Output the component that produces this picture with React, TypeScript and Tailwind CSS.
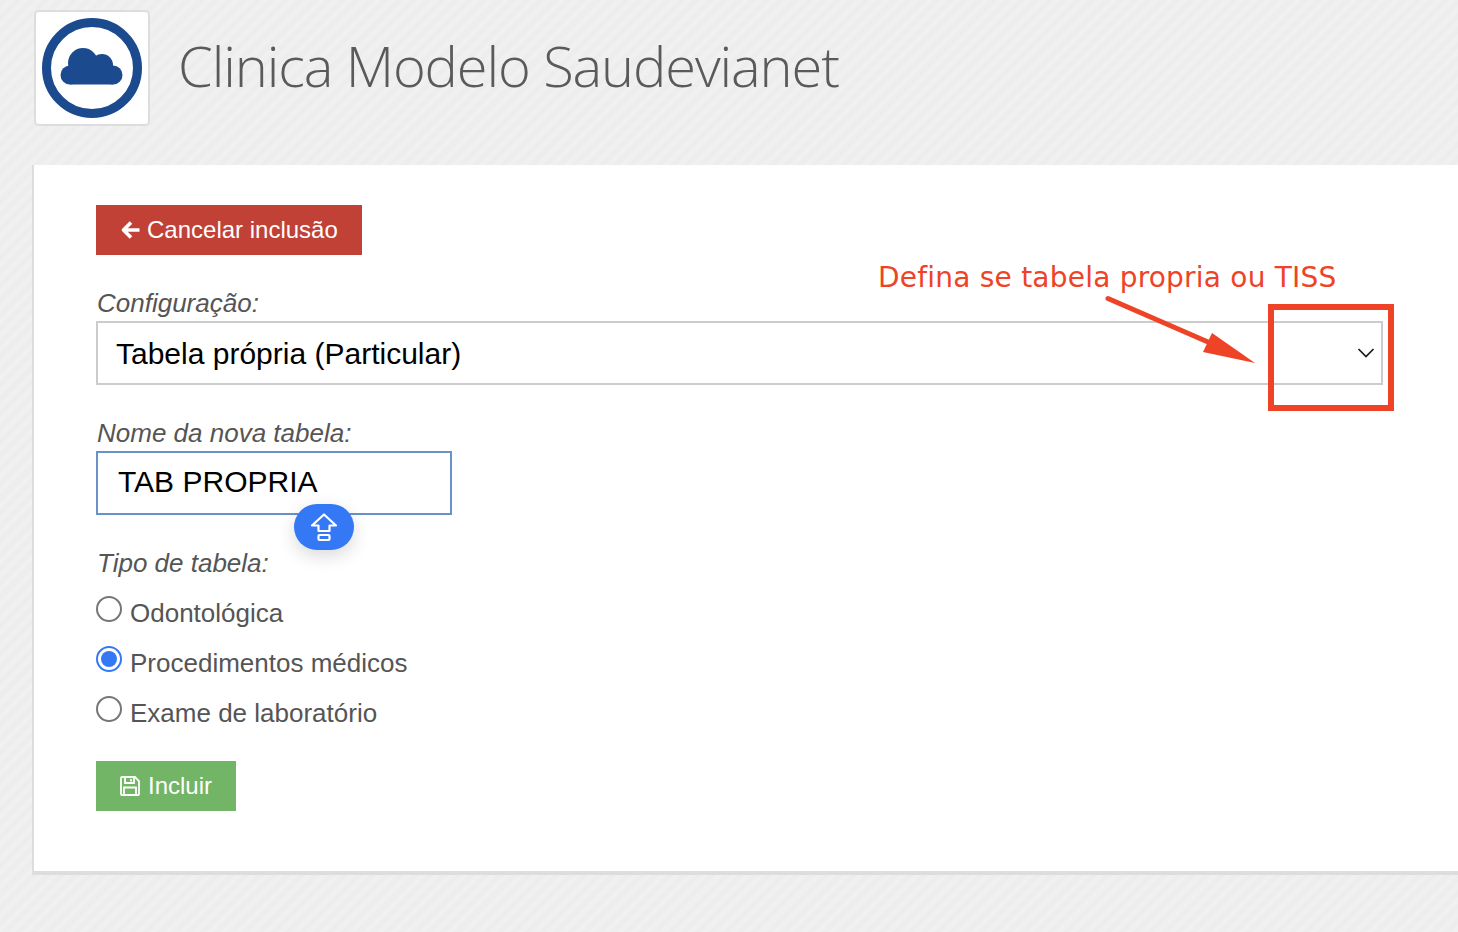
import { FC } from "react";

const labelClass = "block h-[30px] pl-[1px] text-[26px] leading-[30px] italic text-[#555555]";

const Logo: FC = () => {
  return (
    <div className="w-[116px] h-[116px] bg-white border-2 border-[#dddddd] rounded-[5px] flex items-center justify-center">
      <svg width="100" height="100" viewBox="0 0 100 100" fill="#1b4a8f">
        <circle cx="50" cy="50" r="45.5" fill="none" stroke="#1b4a8f" strokeWidth="9" />
        <circle cx="28" cy="57" r="9.5" />
        <circle cx="41" cy="45" r="15" />
        <circle cx="60" cy="47" r="11" />
        <circle cx="71" cy="57" r="9.5" />
        <rect x="28" y="46" width="43" height="20.5" />
      </svg>
    </div>
  );
};

const Radio: FC<{ label: string; checked?: boolean }> = ({ label, checked }) => {
  return (
    <label className="flex items-center h-[50px] text-[26px] text-[#555555]">
      <span
        className={
          checked
            ? "w-[26px] h-[26px] -mt-[8px] rounded-full border-2 border-[#3478f6] flex items-center justify-center"
            : "w-[26px] h-[26px] -mt-[8px] rounded-full border-2 border-[#767676]"
        }
      >
        {checked && <span className="w-[16px] h-[16px] rounded-full bg-[#3478f6]" />}
      </span>
      <span className="ml-2">{label}</span>
    </label>
  );
};

export default function App() {
  return (
    <div className="relative min-h-[932px] overflow-hidden font-['Liberation_Sans',Arial,sans-serif] bg-[repeating-linear-gradient(135deg,#ededed_0px,#ededed_5px,#f0f0f0_5px,#f0f0f0_10px)]">
      {/* header */}
      <div className="h-[165px] pt-[10px] pl-[34px] flex items-start gap-[28px]">
        <Logo />
        <h1 className="mt-[17px] text-[56px] leading-[76px] font-[350] tracking-[-1.12px] text-[#5a5a5a] font-['Open_Sans',sans-serif]">
          Clinica Modelo Saudevianet
        </h1>
      </div>

      {/* form panel */}
      <div className="ml-[32px] bg-white border-l-2 border-b-[4px] border-[#dddddd] pl-[62px] pt-[40px] pb-[60px]">
        <button className="flex items-center gap-[7px] h-[50px] w-[266px] pl-[25px] bg-[#c14137] text-white text-[24px]">
          <svg className="-ml-[1px]" width="20" height="20" viewBox="0 0 19 20" fill="none" stroke="white" strokeWidth="3.6" strokeLinejoin="round">
            <path d="M10.5 2.5 L3 10 L10.5 17.5 M3.5 10 L19 10" />
          </svg>
          Cancelar inclusão
        </button>

        <label className={`${labelClass} mt-[33px]`}>Configuração:</label>
        <div className="mt-[3px] w-[1287px] h-[64px] border-2 border-[#cccccc] flex items-center justify-between pl-[18px] pr-[6px] text-[30px] text-black">
          <span>Tabela própria (Particular)</span>
          <svg width="18" height="12" viewBox="0 0 18 12" fill="none">
            <path d="M1.5 2 L9 9.5 L16.5 2" stroke="#1a1a1a" strokeWidth="1.7" />
          </svg>
        </div>

        <label className={`${labelClass} mt-[33px]`}>Nome da nova tabela:</label>
        <div className="mt-[3px] w-[356px] h-[64px] border-2 border-[#6a92c8] flex items-center pl-[20px] pb-[3px] text-[30px] text-black">
          TAB PROPRIA
        </div>

        <label className={`${labelClass} mt-[33px]`}>Tipo de tabela:</label>
        <div className="mt-[10px]">
          <Radio label="Odontológica" />
          <Radio label="Procedimentos médicos" checked />
          <Radio label="Exame de laboratório" />
        </div>

        <button className="mt-[23px] flex items-center gap-[8px] h-[50px] w-[140px] pl-[24px] bg-[#72b566] text-white text-[24px]">
          <svg width="20" height="20" viewBox="0 0 20 20" fill="none" stroke="white" strokeWidth="1.8">
            <path d="M1 2 Q1 1 2 1 L15 1 L19 5 L19 18 Q19 19 18 19 L2 19 Q1 19 1 18 Z" />
            <path d="M5 1 L5 7 L14 7 L14 1 M11 3 L11 5.5" />
            <path d="M4 19 L4 11.5 L16 11.5 L16 19" />
          </svg>
          Incluir
        </button>
      </div>

      {/* caps lock hint over the input */}
      <div className="absolute left-[294px] top-[504px] w-[60px] h-[46px] rounded-full bg-[#3478f6] shadow-[0_6px_18px_rgba(0,0,0,0.15)] flex items-center justify-center">
        <svg width="28" height="30" viewBox="0 0 28 30" fill="none" stroke="white" strokeWidth="2.2" strokeLinejoin="round">
          <path d="M14 2.5 L26 13.5 L19.5 13.5 L19.5 19 L8.5 19 L8.5 13.5 L2 13.5 Z" />
          <rect x="8.5" y="23" width="11" height="5" rx="1" />
        </svg>
      </div>

      {/* annotation drawn on top of the screenshot */}
      <span className="absolute left-[878px] top-[261px] text-[28px] tracking-[0.22px] leading-[34px] whitespace-nowrap text-[#ee4327] font-['DejaVu_Sans',sans-serif]">
        Defina se tabela propria ou TISS
      </span>
      <svg className="absolute left-[1100px] top-[290px]" width="165" height="80" viewBox="0 0 165 80">
        <path d="M8 8.5 L108 52" stroke="#ee4327" strokeWidth="5" strokeLinecap="round" />
        <path d="M155 73 L112 43 L103 62 Z" fill="#ee4327" />
      </svg>
      <div className="absolute left-[1268px] top-[304px] w-[126px] h-[107px] border-[6px] border-[#ee4327]" />
    </div>
  );
}
